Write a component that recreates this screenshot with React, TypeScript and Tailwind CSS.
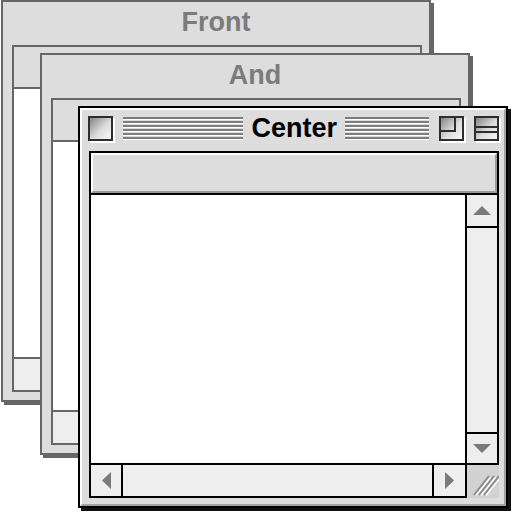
import React from "react";

type Kind = "close" | "zoom" | "collapse";

// Platinum title bar box (close / zoom / collapse)
function TitleBox({ kind }: { kind: Kind }) {
  const id = `tb-grad-${kind}`;
  return (
    <svg width="27" height="27" viewBox="0 0 27 27" className="block shrink-0">
      <defs>
        <linearGradient id={id} x1="0" y1="0" x2="1" y2="1">
          <stop offset="0" stopColor="#858585" />
          <stop offset="0.55" stopColor="#dcdcdc" />
          <stop offset="1" stopColor="#f7f7f7" />
        </linearGradient>
      </defs>
      <rect x="2" y="2" width="25" height="25" fill="#ffffff" />
      <rect x="0" y="0" width="25" height="25" fill="#2e2e2e" />
      <rect x="2" y="2" width="21" height="21" fill={`url(#${id})`} />
      {kind === "zoom" && (
        <path d="M2 15H16V2" stroke="#2e2e2e" strokeWidth="2" fill="none" />
      )}
      {kind === "collapse" && (
        <>
          <rect x="2" y="10" width="21" height="2" fill="#2e2e2e" />
          <rect x="2" y="15" width="21" height="2" fill="#2e2e2e" />
        </>
      )}
    </svg>
  );
}

function Stripes({ className = "" }: { className?: string }) {
  return (
    <div className={`flex flex-col gap-[1px] pt-[1px] h-[25px] ${className}`}>
      {[0, 1, 2, 3, 4, 5].map((i) => (
        <div key={i} className="h-[3px] border-t-2 border-[#7c7c7c] bg-white" />
      ))}
    </div>
  );
}

function Arrow({ dir }: { dir: "up" | "down" | "left" | "right" }) {
  if (dir === "up" || dir === "down") {
    return (
      <svg width="18" height="9" viewBox="0 0 18 9" className="block">
        <path d={dir === "up" ? "M9 0L18 9H0Z" : "M0 0H18L9 9Z"} fill="#7a7a7a" />
      </svg>
    );
  }
  return (
    <svg width="9" height="17" viewBox="0 0 9 17" className="block">
      <path d={dir === "left" ? "M0 8.5L9 0V17Z" : "M0 0L9 8.5L0 17Z"} fill="#7a7a7a" />
    </svg>
  );
}

function GrowBox() {
  return (
    <svg width="30" height="31" viewBox="0 0 30 31" className="block">
      {[5, 10, 15].map((x) => (
        <g key={x}>
          <path d={`M${x} 28L${x + 15} 9`} stroke="#8a8a8a" strokeWidth="2" />
          <path d={`M${x + 2} 28.5L${x + 16.5} 10.5`} stroke="#ffffff" strokeWidth="1.5" />
        </g>
      ))}
    </svg>
  );
}

function Window({
  title,
  active,
  className,
}: {
  title: string;
  active?: boolean;
  className: string;
}) {
  const line = active ? "border-black" : "border-[#666666]";
  const titleFont = "font-['Liberation_Sans',Arial,sans-serif] font-bold text-[27px] leading-[27px] -mt-[1px]";

  return (
    <div
      className={`absolute w-[430px] h-[402px] border-2 bg-[#dddddd] ${line} ${
        active ? "shadow-[3px_3px_0_#111111]" : "shadow-[3px_3px_0_#666666]"
      } ${className}`}
    >
      <div
        className={`h-full flex flex-col border-2 pb-[6px] ${
          active
            ? "border-t-white border-l-white border-r-[#a3a3a3] border-b-[#a3a3a3]"
            : "border-[#dddddd]"
        }`}
      >
        {/* title bar */}
        {active ? (
          <div className="h-[37px] flex items-start pt-[6px] pl-[6px] pr-[3px]">
            <TitleBox kind="close" />
            <Stripes className="flex-1 ml-[8px]" />
            <span className={`${titleFont} text-black px-[8px]`}>{title}</span>
            <Stripes className="w-[84px]" />
            <div className="ml-[10px]">
              <TitleBox kind="zoom" />
            </div>
            <div className="ml-[8px]">
              <TitleBox kind="collapse" />
            </div>
          </div>
        ) : (
          <div className="h-[37px] flex justify-center items-start pt-[6px]">
            <span className={`${titleFont} text-[#7b7b7b]`}>{title}</span>
          </div>
        )}

        {/* content frame */}
        <div className="mt-[4px] ml-[7px] mr-[5px] flex-1 flex flex-col">
          {/* header */}
          <div className={`h-[44px] border-2 ${line}`}>
            <div
              className={`h-full ${
                active
                  ? "border-2 border-t-white border-l-white border-r-[#9a9a9a] border-b-[#9a9a9a]"
                  : ""
              }`}
            />
          </div>

          {/* list + vertical scroll bar */}
          <div className="flex-1 flex">
            <div className={`flex-1 bg-white border-l-2 ${line}`} />
            <div className={`w-[34px] flex flex-col bg-[#eeeeee] border-x-2 ${line}`}>
              <div className={`h-[33px] flex items-center justify-center border-b-2 ${line}`}>
                {active && <Arrow dir="up" />}
              </div>
              <div className="flex-1" />
              <div className={`h-[31px] flex items-center justify-center border-t-2 ${line}`}>
                {active && <Arrow dir="down" />}
              </div>
            </div>
          </div>

          {/* horizontal scroll bar + grow box */}
          <div className="h-[35px] flex">
            <div className={`flex-1 flex bg-[#eeeeee] border-2 ${line}`}>
              <div className={`w-[32px] flex items-center justify-center border-r-2 ${line}`}>
                {active && <Arrow dir="left" />}
              </div>
              <div className="flex-1" />
              <div className={`w-[33px] flex items-center justify-center border-l-2 ${line}`}>
                {active && <Arrow dir="right" />}
              </div>
            </div>
            <div className={`w-[32px] border-t-2 ${line} bg-[#d2d2d2] flex items-end justify-end`}>
              {active && <GrowBox />}
            </div>
          </div>
        </div>
      </div>
    </div>
  );
}

export default function App() {
  return (
    <div className="relative w-[512px] h-[512px] bg-white overflow-hidden">
      <Window title="Front" className="left-[1px] top-0" />
      <Window title="And" className="left-[40px] top-[53px]" />
      <Window title="Center" active className="left-[78px] top-[106px]" />
    </div>
  );
}
